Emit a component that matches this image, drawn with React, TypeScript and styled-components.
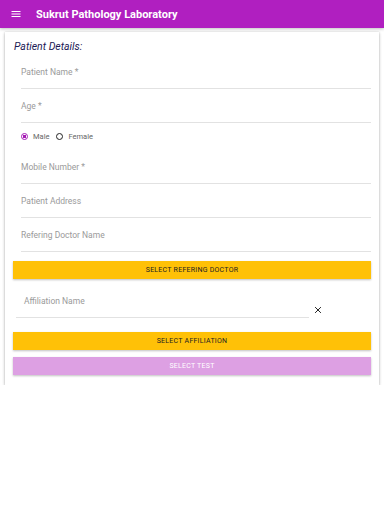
import * as React from 'react';
import styled, { createGlobalStyle } from 'styled-components';

const GlobalStyle = createGlobalStyle`
  body {
    margin: 0;
    background: #fff;
    font-family: Roboto, "Liberation Sans", sans-serif;
  }
`;

const fields = ['Patient Name *', 'Age *'];
const moreFields = ['Mobile Number *', 'Patient Address', 'Refering Doctor Name'];

const App = () => (
  <Page>
    <GlobalStyle />
    <AppBar>
      <MenuIcon viewBox="0 0 24 24">
        <path d="M3 6h18v2H3zM3 11h18v2H3zM3 16h18v2H3z" fill="#fff" />
      </MenuIcon>
      <Title>Sukrut Pathology Laboratory</Title>
    </AppBar>
    <Card>
      <Heading>Patient Details:</Heading>
      {fields.map((f) => (
        <Field key={f}>
          <Label>{f}</Label>
        </Field>
      ))}
      <RadioRow>
        <RadioItem>
          <Radio checked />
          Male
        </RadioItem>
        <RadioItem>
          <Radio />
          Female
        </RadioItem>
      </RadioRow>
      {moreFields.map((f) => (
        <Field key={f}>
          <Label>{f}</Label>
        </Field>
      ))}
      <Button $top={9}>Select Refering Doctor</Button>
      <AffRow>
        <AffField>
          <Label>Affiliation Name</Label>
        </AffField>
        <CloseIcon viewBox="0 0 24 24">
          <path d="M5 5l14 14M19 5L5 19" stroke="#111" strokeWidth="2.2" fill="none" />
        </CloseIcon>
      </AffRow>
      <Button $top={14}>Select Affiliation</Button>
      <Button $top={7} $disabled>Select Test</Button>
    </Card>
  </Page>
);

const Page = styled.div`
  width: 384px;
`;

const AppBar = styled.header`
  height: 28px;
  background: #b01fc0;
  display: flex;
  align-items: center;
  padding-left: 10px;
  box-shadow: 0 1px 3px rgba(0, 0, 0, 0.25);
`;

const MenuIcon = styled.svg`
  width: 12px;
  height: 12px;
  margin-right: 14px;
`;

const Title = styled.h1`
  margin: 0;
  color: #fff;
  font-size: 11px;
  font-weight: 700;
`;

const Card = styled.div`
  margin: 4px 5px 0;
  padding: 7px 8px 10px;
  background: #fff;
  box-shadow: 0 1px 3px rgba(0, 0, 0, 0.3), 0 0 1px rgba(0, 0, 0, 0.15);
`;

const Heading = styled.div`
  height: 16px;
  padding-left: 1px;
  font-size: 10.5px;
  font-style: italic;
  color: #1c1a55;
  line-height: 16px;
`;

const Field = styled.div`
  margin-left: 8px;
  height: 34px;
  border-bottom: 1px solid #e2e2e2;
  box-sizing: border-box;
  display: flex;
  align-items: center;
`;

const Label = styled.span`
  font-size: 8.5px;
  color: #9a9a9a;
`;

const RadioRow = styled.div`
  margin-left: 8px;
  height: 27px;
  display: flex;
  align-items: center;
  gap: 7px;
`;

const RadioItem = styled.label`
  display: flex;
  align-items: center;
  gap: 5px;
  font-size: 7.5px;
  color: #666;
`;

const Radio = styled.span<{ checked?: boolean }>`
  width: 7px;
  height: 7px;
  border-radius: 50%;
  box-sizing: border-box;
  border: 1px solid ${(p) => (p.checked ? '#a51cb5' : '#222')};
  background: ${(p) => (p.checked ? 'radial-gradient(circle, #a51cb5 45%, #fff 55%)' : '#fff')};
`;

const Button = styled.div<{ $top: number; $disabled?: boolean }>`
  margin-top: ${(p) => p.$top}px;
  height: 18px;
  display: flex;
  align-items: center;
  justify-content: center;
  text-transform: uppercase;
  font-size: 7px;
  font-weight: 400;
  letter-spacing: 0.25px;
  color: ${(p) => (p.$disabled ? '#fff' : '#222')};
  background: ${(p) => (p.$disabled ? '#dda0e3' : '#ffc107')};
  box-shadow: 0 1px 2px rgba(0, 0, 0, 0.25);
`;

const AffRow = styled.div`
  display: flex;
  align-items: flex-end;
  height: 39px;
  margin-left: 3px;
`;

const AffField = styled.div`
  width: 293px;
  height: 39px;
  padding: 0 0 11px 8px;
  box-sizing: border-box;
  border-bottom: 1px solid #e2e2e2;
  display: flex;
  align-items: flex-end;
`;

const CloseIcon = styled.svg`
  width: 10px;
  height: 10px;
  margin: 0 0 3px 4px;
`;

export default App;
